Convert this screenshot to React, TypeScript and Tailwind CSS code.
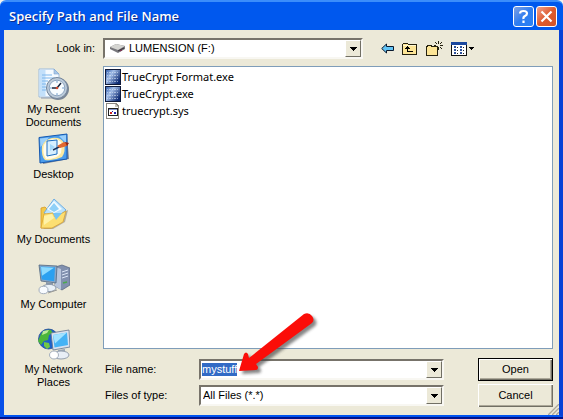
import { useEffect, useRef, useState } from "react";
import type { ReactNode } from "react";

interface Place {
  label: string;
  icon: ReactNode;
}

interface FileEntry {
  name: string;
  kind: "exe" | "sys";
}

const files: FileEntry[] = [
  { name: "TrueCrypt Format.exe", kind: "exe" },
  { name: "TrueCrypt.exe", kind: "exe" },
  { name: "truecrypt.sys", kind: "sys" },
];

function RecentIcon() {
  return (
    <svg viewBox="0 0 32 32" className="h-8 w-8" aria-hidden="true">
      <path d="M1 1h15l5 5v23H1z" fill="#f4faff" stroke="#9dbbdc" />
      <path d="M1.5 2v26h6V2z" fill="#c3e0fa" />
      <path d="M16 1v5h5z" fill="#a8c8ea" stroke="#7fa5cf" strokeWidth=".6" />
      <path d="M4 7h10M4 10h13M4 13h6M4 16h4M4 19h4M4 22h4" stroke="#7db6ec" />
      <path d="M3 30h16" stroke="#8d9aae" />
      <circle cx="20" cy="21" r="11" fill="#7b8796" />
      <circle cx="19" cy="20" r="10.5" fill="#bccbda" stroke="#73859b" />
      <circle cx="19" cy="20" r="7.8" fill="#f7fcff" stroke="#8da5c0" />
      <path d="M19 13.2v1.5M19 25.3v1.5M12.2 20h1.5M24.3 20h1.5" stroke="#4b83bd" />
      <path d="M14 20h5l4-5" fill="none" stroke="#18243c" strokeWidth="1.5" />
      <circle cx="19" cy="20" r="1.3" fill="#d24a2c" />
    </svg>
  );
}

function DesktopIcon() {
  return (
    <svg viewBox="0 0 32 32" className="h-8 w-8" aria-hidden="true">
      <path d="M3 5l26-3 2 24-26 5z" fill="#7d8795" />
      <path d="M1 4.500L29 1v25L2 30z" fill="#4a9cec" stroke="#1659b0" />
      <path d="M2 5.500l9-1L2.500 14zM28 2v8l-7-7z" fill="#9bd0fb" />
      <path d="M4 13q3-7 10-8 9-1 12 5 2 9-2 14-8 4-17 3-4-4-3-14z" fill="#fbe9a0" />
      <path d="M6 12q3-6 9-6 7 0 9 5l-1 9q-4 6-15 6-4-6-2-14z" fill="#fffdf0" />
      <path d="M9 8l10-1v14L9 23z" fill="#d6efff" stroke="#1e6ec2" />
      <path d="M12 11l5 3-5 4z" fill="#a3d8fa" />
      <path d="M15 17l8-4" stroke="#18315c" strokeWidth="1.5" />
      <path d="M19 13l7-4 4 1-1 3-7 2z" fill="#e0672f" />
      <path d="M27 9l4 1-2 3z" fill="#8e2616" />
    </svg>
  );
}

function DocumentsIcon() {
  return (
    <svg viewBox="0 0 32 32" className="h-8 w-8" aria-hidden="true">
      <path d="M5 31h10l12-7 3-12-4 2z" fill="#8f8a79" opacity=".6" />
      <path d="M3 10l4-1 3 3 16 1-1 10-12 7H3z" fill="#f3c849" stroke="#d69a24" strokeWidth=".8" />
      <path d="M16 1l12 11-11 10-11-7z" fill="#b9e2fc" stroke="#70aee2" />
      <path d="M16 3l8 8-8 4-7-4z" fill="#f4fbff" />
      <path d="M16 5l5 6-5 3-5-3z" fill="#8fd0f8" />
      <path d="M3 30l3-14 9-1 2 4 11-6-3 11-11 6z" fill="#fcdf72" stroke="#dba535" strokeWidth=".8" />
      <path d="M15 15l9 0-6 7z" fill="#77c4f4" />
      <path d="M6 18l8-2 2 4-10 7z" fill="#fff2a8" />
    </svg>
  );
}

function ComputerIcon() {
  return (
    <svg viewBox="0 0 32 32" className="h-8 w-8" aria-hidden="true">
      <path d="M17 4l7-2 8 3v17l-8 5-7-4z" fill="#8190ae" stroke="#53617d" strokeWidth=".7" />
      <path d="M17 4l6 2v21l-6-4z" fill="#b8c5db" />
      <path d="M24 9l6-2M24 12l6-2M24 15l6-2" stroke="#dbe5f5" />
      <path d="M25 20l4-1" stroke="#4ba84c" strokeWidth="1.5" />
      <path d="M1 2l18 1-1 17-15-2z" fill="#8ba6c7" stroke="#50677f" strokeWidth=".8" />
      <path d="M2.5 3.5l14.500.8-.8 14-12.500-1.800z" fill="#2ba0f0" />
      <path d="M3 4l13 .7-12 8z" fill="#8ddafe" />
      <path d="M8 19l7 1v4H8z" fill="#8796a9" />
      <ellipse cx="11" cy="25" rx="7" ry="3.600" fill="#eaf1f8" stroke="#8e9aab" />
      <ellipse cx="5.500" cy="27" rx="4.500" ry="3.700" fill="#f8fbff" stroke="#a3aebd" />
      <path d="M10 30l9-3" stroke="#9b9b97" />
    </svg>
  );
}

function NetworkIcon() {
  return (
    <svg viewBox="0 0 32 32" className="h-8 w-8" aria-hidden="true">
      <circle cx="10.500" cy="11" r="10" fill="#1d61c8" stroke="#123c8b" strokeWidth=".7" />
      <path d="M3 6q4-5 10-4l2 3-4 2-1 5-4 1-3 4-3-4z" fill="#4bb53b" />
      <path d="M6 14l5 1 1 4-3 2-3-3z" fill="#72c845" />
      <path d="M5 3l6-1-2 3-5 2z" fill="#c0eb9d" />
      <path d="M13 5l18-3 1 17-17 3z" fill="#d9e2ef" stroke="#65758d" strokeWidth=".8" />
      <path d="M15 7l14-2.500 1 12.500-13.500 2.500z" fill="#45b3f5" />
      <path d="M15 7l14-2.500-12 11z" fill="#a2e3ff" />
      <path d="M20 22l7-1v4h-7z" fill="#9aa7b7" />
      <ellipse cx="23" cy="27" rx="8" ry="4" fill="#e8eef6" stroke="#949fae" />
      <ellipse cx="16" cy="27" rx="4.500" ry="4" fill="#fff" stroke="#a5afbd" />
    </svg>
  );
}

const places: Place[] = [
  { label: "My Recent Documents", icon: <RecentIcon /> },
  { label: "Desktop", icon: <DesktopIcon /> },
  { label: "My Documents", icon: <DocumentsIcon /> },
  { label: "My Computer", icon: <ComputerIcon /> },
  { label: "My Network Places", icon: <NetworkIcon /> },
];

function FileIcon({ kind }: { kind: FileEntry["kind"] }) {
  if (kind === "sys") {
    return (
      <svg viewBox="0 0 16 16" className="h-4 w-4 shrink-0" shapeRendering="crispEdges" aria-hidden="true">
        <path d="M1 0h10l3 3v13H1z" fill="#8b8781" />
        <path d="M2 1h8v3h3v11H2z" fill="#fff" />
        <path d="M10 1l3 3h-3z" fill="#c9c6bf" />
        <path d="M3 5h10v8H3z" fill="#222" />
        <path d="M4 7h8v5H4z" fill="#fff" />
        <path d="M4 6h8v1H4z" fill="#8091c9" />
        <path d="M5 9h2v2H5z" fill="#c22" />
        <path d="M7 8h1v1H7zM9 9h2v2H9z" fill="#22a" />
      </svg>
    );
  }
  return (
    <svg viewBox="0 0 16 16" className="h-4 w-4 shrink-0" shapeRendering="crispEdges" aria-hidden="true">
      <defs>
        <linearGradient id="exeFill" x1="0" x2="1" y1="0" y2=".7">
          <stop offset="0" stopColor="#3560ad" />
          <stop offset=".4" stopColor="#a3bee8" />
          <stop offset="1" stopColor="#0f2c74" />
        </linearGradient>
      </defs>
      <path d="M0 0h16v16H0z" fill="#0f1a3a" />
      <path d="M1 1h14v14H1z" fill="url(#exeFill)" />
      <path
        d="M2 3.500h12M2 6.500h12M2 9.500h12M2 12.500h12"
        stroke="#e2ecfb"
        strokeDasharray="1 1 2 1"
        opacity=".55"
      />
    </svg>
  );
}

function DropArrow() {
  return (
    <span className="pointer-events-none absolute top-0 right-0 bottom-0 flex w-4 items-center justify-center border border-t-white border-r-[#716f64] border-b-[#716f64] border-l-white bg-[#ece9d8]">
      <svg viewBox="0 0 7 4" className="h-1 w-[7px]" shapeRendering="crispEdges" aria-hidden="true">
        <path d="M0 0h7v1H6v1H5v1H4v1H3V3H2V2H1V1H0z" />
      </svg>
    </span>
  );
}

const sunken =
  "relative flex h-[21px] items-center border-2 border-t-[#77736a] border-r-[#f8f7f2] border-b-[#f8f7f2] border-l-[#77736a] bg-white";

function Toolbar() {
  return (
    <div className="flex items-center gap-2">
      <button type="button" aria-label="Back">
        <svg viewBox="0 0 13 11" className="h-[11px] w-[13px]">
          <path d="M.7 5.500L5.500 1v2.500h7v4h-7V10z" fill="#62c4f5" stroke="#09182d" />
        </svg>
      </button>
      <button type="button" aria-label="Up one level">
        <svg viewBox="0 0 16 14" className="h-3.5 w-4" shapeRendering="crispEdges">
          <path d="M.5 12.500v-10l1-1h4l1 1h8v10z" fill="#fde596" stroke="#25210f" />
          <path d="M1 3.500h13" stroke="#fff8d4" />
          <path d="M5 4h1v1h1v1h1v1H6v2h5v1H5V7H3V6h1V5h1z" fill="#000" />
        </svg>
      </button>
      <button type="button" aria-label="Create new folder">
        <svg viewBox="0 0 17 16" className="h-4 w-[17px]" shapeRendering="crispEdges">
          <path d="M.5 14.500v-9h1v-1h4v1h6v9z" fill="#fde596" stroke="#25210f" />
          <path
            d="M12 0h1v3h-1zM12 6h1v3h-1zM8 4h2v1H8zM14 4h3v1h-3zM9 1h1v1H9zM10 2h1v1h-1zM15 1h1v1h-1zM14 2h1v1h-1zM14 6h1v1h-1zM15 7h1v1h-1z"
            fill="#25210f"
          />
        </svg>
      </button>
      <button type="button" aria-label="View menu" className="flex items-center gap-0.5">
        <svg viewBox="0 0 16 14" className="h-3.5 w-4" shapeRendering="crispEdges">
          <path d="M0 0h16v14H0z" fill="#111" />
          <path d="M1 3h14v10H1z" fill="#fff" />
          <path d="M0 0h16v3H0z" fill="#1b489e" />
          <path d="M3 4h2v2H3zM9 4h2v2H9zM3 7h2v2H3zM9 7h2v2H9zM3 10h2v2H3zM9 10h2v2H9z" fill="#2e529c" />
          <path d="M6 5.500h1M12 5.500h1M6 8.500h1M12 8.500h1M6 11.500h1M12 11.500h1" stroke="#222" />
        </svg>
        <svg viewBox="0 0 5 3" className="h-[3px] w-[5px]" shapeRendering="crispEdges">
          <path d="M0 0h5v1H4v1H3v1H2V2H1V1H0z" />
        </svg>
      </button>
    </div>
  );
}

function TitleBar() {
  return (
    <header className="flex h-[30px] items-center justify-between rounded-t-md border-t-2 border-[#3b8dfb] bg-[#0058ee] pr-1.5 pl-[9px] font-['Open_Sans',sans-serif]">
      <h1
        className="text-[13px] font-semibold text-white"
        style={{ textShadow: "1px 1px #0a2a8a" }}
      >
        Specify Path and File Name
      </h1>
      <div className="flex gap-0.5">
        <button
          type="button"
          aria-label="Help"
          className="flex h-[21px] w-[21px] items-center justify-center rounded-[3px] border border-white bg-linear-to-br from-[#7d9fe0] via-[#2f7df0] to-[#2a80f5]"
        >
          <svg viewBox="0 0 13 15" className="h-[15px] w-[13px]" aria-hidden="true">
            <path
              d="M3 4.500Q3 2 6.500 2T10 4.500Q10 6 8 7T6.500 10M6.500 11.500V14"
              fill="none"
              stroke="#fff"
              strokeWidth="2.200"
            />
          </svg>
        </button>
        <button
          type="button"
          aria-label="Close"
          className="flex h-[21px] w-[21px] items-center justify-center rounded-[3px] border border-white bg-linear-to-br from-[#f0a08a] via-[#dd5a2d] to-[#d0542a]"
        >
          <svg viewBox="0 0 13 13" className="h-[13px] w-[13px]" aria-hidden="true">
            <path d="M1.500 1.500l10 10M11.500 1.500l-10 10" stroke="#fff" strokeWidth="2.200" />
          </svg>
        </button>
      </div>
    </header>
  );
}

// Red pointer that calls out the file name box
function Pointer() {
  return (
    <svg viewBox="0 0 84 70" className="pointer-events-none absolute -top-[50px] left-[37px] h-[70px] w-[84px]" aria-hidden="true">
      <defs>
        <filter id="soft" x="-20%" y="-20%" width="140%" height="140%">
          <feGaussianBlur stdDeviation="1.500" />
        </filter>
      </defs>
      <path
        d="M1 60L6 43q2-3 4 0l1 4L66 3q5-2 8 2t0 7L18 53l2 3q0 3-2 3z"
        transform="translate(3 3)"
        fill="#444"
        opacity=".65"
        filter="url(#soft)"
      />
      <path d="M1 60L6 43q2-3 4 0l1 4L66 3q5-2 8 2t0 7L18 53l2 3q0 3-2 3z" fill="#fb0d08" />
    </svg>
  );
}

export default function App() {
  const [fileName, setFileName] = useState("mystuff");
  const nameRef = useRef<HTMLInputElement>(null);

  useEffect(() => {
    nameRef.current?.focus();
    nameRef.current?.select();
  }, []);

  return (
    <div className="border-b-2 border-[#00138c] bg-[#f4f3ee] font-['Liberation_Sans',sans-serif] text-[11px] leading-[13px] text-black">
      <TitleBar />

      <main className="relative border-r-4 border-b-2 border-l-4 border-r-[#0841d6] border-b-[#0054f0] border-l-[#0850e8] bg-[#ece9d8] pt-2 pr-1.5 pb-2">
        <div className="flex items-center">
          <label htmlFor="lookIn" className="w-[99px] shrink-0 pr-2 text-right">
            Look in:
          </label>
          <div className={`${sunken} mr-[18px] min-w-0 flex-1`}>
            <svg viewBox="0 0 17 11" className="ml-1 h-[11px] w-[17px] shrink-0" aria-hidden="true">
              <path d="M1 4l6-3 9 2v3l-7 4-8-4z" fill="#77777c" />
              <path d="M1 4l6-3 9 2-7 4z" fill="#d5d5d2" />
              <path d="M9 8l6-3" stroke="#353038" />
              <path d="M11 8l2-1" stroke="#7c244a" />
            </svg>
            <select id="lookIn" className="h-full w-full appearance-none pl-[3px] outline-none">
              <option>LUMENSION (F:)</option>
            </select>
            <DropArrow />
          </div>
          <div className="w-[172px] shrink-0">
            <Toolbar />
          </div>
        </div>

        <div className="mt-[7px] flex">
          <nav className="w-[99px] shrink-0 pt-0.5">
            {places.map((place) => (
              <button
                key={place.label}
                type="button"
                className="flex h-[65px] w-full flex-col items-center gap-[3px] px-4"
              >
                {place.icon}
                <span className="-mx-2">{place.label}</span>
              </button>
            ))}
          </nav>

          <div className="min-w-0 flex-1">
            <ul className="h-[283px] border border-[#7f9db9] bg-white p-px font-['Noto_Sans',sans-serif]">
              {files.map((file) => (
                <li key={file.name} className="flex h-[17px] items-center gap-px">
                  <FileIcon kind={file.kind} />
                  {file.name}
                </li>
              ))}
            </ul>

            <form
              className="mt-[9px] grid grid-cols-[96px_1fr_75px] items-center gap-y-[3px]"
              onSubmit={(e) => e.preventDefault()}
            >
              <label htmlFor="fileName" className="pl-0.5">
                File name:
              </label>
              <div className={`${sunken} mr-[34px]`}>
                <input
                  id="fileName"
                  ref={nameRef}
                  value={fileName}
                  onChange={(e) => setFileName(e.target.value)}
                  className="w-full pl-px outline-none selection:bg-[#316ac5] selection:text-white"
                />
                <DropArrow />
                <Pointer />
              </div>
              <button
                type="submit"
                className="h-[23px] border border-black bg-[#ece9d8] shadow-[inset_1px_1px_#fff,inset_-1px_-1px_#716f64,inset_-2px_-2px_#aca899]"
              >
                Open
              </button>

              <label htmlFor="fileType" className="pl-0.5">
                Files of type:
              </label>
              <div className={`${sunken} mr-[34px]`}>
                <select id="fileType" className="h-full w-full appearance-none pl-0.5 outline-none">
                  <option>All Files (*.*)</option>
                </select>
                <DropArrow />
              </div>
              <button
                type="button"
                className="h-[23px] bg-[#ece9d8] shadow-[inset_1px_1px_#fff,inset_-1px_-1px_#716f64,inset_-2px_-2px_#aca899]"
              >
                Cancel
              </button>
            </form>
          </div>
        </div>

        <svg viewBox="0 0 12 12" className="absolute right-0 bottom-0 h-3 w-3" aria-hidden="true">
          <path d="M0 12L12 0M4 12l8-8M8 12l4-4" stroke="#fff" />
          <path d="M1 12L12 1M5 12l7-7M9 12l3-3" stroke="#aca899" strokeWidth="1.500" />
        </svg>
      </main>
    </div>
  );
}
